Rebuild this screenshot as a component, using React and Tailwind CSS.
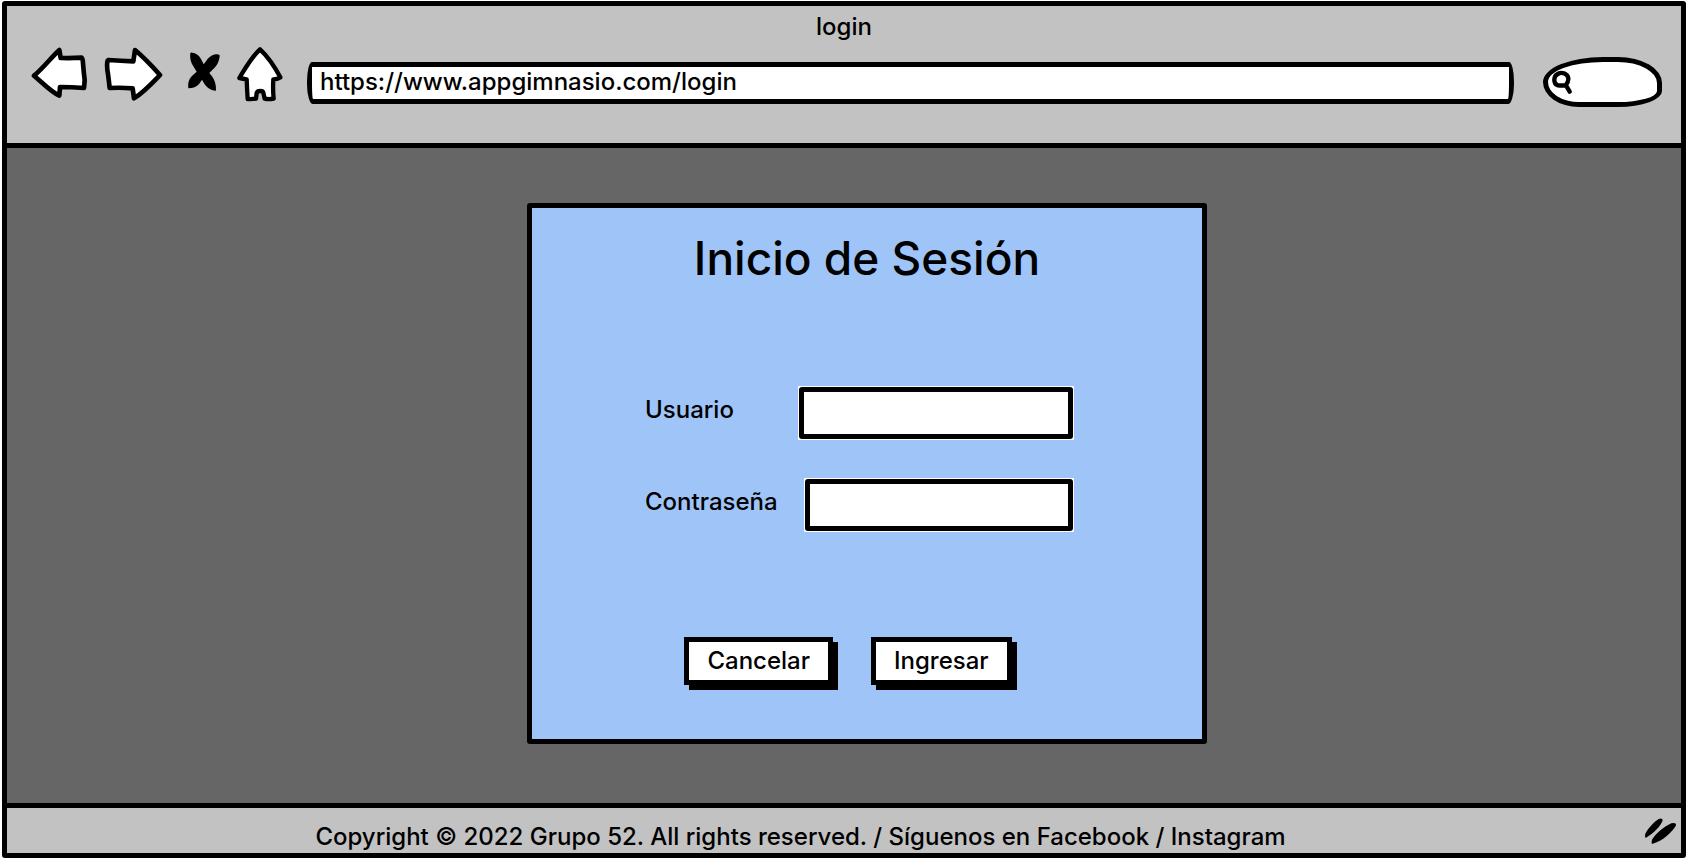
import React from "react";

function BackIcon() {
  return (
    <svg viewBox="93 138 171 168" className="h-[56px] w-[57px]" aria-hidden="true">
      <path d="M102 227C128 206 153 173 178 150L182 174Q215 175 245 173Q248 173 249 190Q251 215 254 240Q253 255 252 264Q215 261 180 261L178 287C153 276 127 248 102 227Z" fill="#fff" stroke="#000" strokeWidth="14" strokeLinejoin="round" />
    </svg>
  );
}

function ForwardIcon() {
  return (
    <svg viewBox="314 138 177 168" className="h-[56px] w-[59px]" aria-hidden="true">
      <path d="M327 180Q364 183 402 184L407 150C432 171 458 198 482 225C458 250 431 279 404 295L400 265Q365 262 331 264Q329 245 326 222Q322 203 324 185Q324 181 327 180Z" fill="#fff" stroke="#000" strokeWidth="14" strokeLinejoin="round" />
    </svg>
  );
}

function StopIcon() {
  return (
    <svg viewBox="561 136 102 168" className="h-[56px] w-[34px]" aria-hidden="true">
      <path d="M571 157Q571 155 577 156C592 158 600 168 605 179L611 191L619 180C627 169 638 161 651 161Q660 161 659 166C658 180 651 196 639 206L628 217L636 227C645 239 649 254 648 270C634 270 621 261 613 249L606 237L598 249C590 258 579 263 565 263C563 249 566 237 575 227L590 213L580 197C572 185 569 172 571 157Z" fill="#000" />
    </svg>
  );
}

function HomeIcon() {
  return (
    <svg viewBox="708 135 144 168" className="h-[56px] w-[48px]" aria-hidden="true">
      <path d="M780 145C803 166 824 197 841 229Q832 235 820 235Q818 264 821 293Q806 296 794 293L790 275Q789 270 781 270Q772 270 770 276L768 293Q755 295 743 294Q741 262 740 235Q730 233 718 231C735 203 753 170 780 145Z" fill="#fff" stroke="#000" strokeWidth="13" strokeLinejoin="round" />
    </svg>
  );
}

function SearchIcon() {
  return (
    <svg viewBox="213 218 63 75" className="h-[25px] w-[21px] shrink-0" aria-hidden="true">
      <path d="M257 264Q245 265 233 264C219 258 220 237 233 230C247 222 263 230 265 243Q266 254 257 264ZM258 264L269 283" fill="none" stroke="#000" strokeWidth="13" strokeLinecap="round" strokeLinejoin="round" />
    </svg>
  );
}

function ResizeIcon() {
  return (
    <svg viewBox="433 119 99 90" className="h-[30px] w-[33px] shrink-0" aria-hidden="true">
      <path d="M438 185Q434 181 437 172C446 155 464 136 477 128Q489 124 489 132C485 147 462 172 438 185ZM457 203Q454 199 457 190C469 171 493 151 515 141Q530 138 529 147C520 165 490 195 457 203Z" fill="#000" />
    </svg>
  );
}

function Field({ id, label, type, width }) {
  return (
    <div className="flex items-start justify-between">
      <label htmlFor={id} className="pt-2 leading-8">{label}</label>
      <div className={`${width} bg-white p-px`}>
        <input id={id} type={type} className="block h-[52px] w-full rounded-[3px] border-[5px] border-black bg-white px-2 outline-none" />
      </div>
    </div>
  );
}

function SketchButton({ type, children }) {
  return (
    <button type={type} className="h-12 border-[5px] border-black bg-white px-[18px] leading-8 shadow-[5px_5px_0_#000]">
      {children}
    </button>
  );
}

export default function App() {
  return (
    <div className="flex min-h-screen flex-col bg-white px-[2px] pt-px pb-[2px] font-['Inter',sans-serif] text-[24px] font-medium text-black">
      <div className="flex flex-1 flex-col rounded-[3px] border-[5px] border-black bg-[#c2c2c2]">
        <header className="flex h-[142px] flex-col border-b-[5px] border-black">
          <h1 className="h-10 pt-[5px] text-center leading-8">login</h1>
          <div className="flex items-start pr-[19px] pl-6">
            <nav className="flex items-start">
              <button type="button" aria-label="Atrás"><BackIcon /></button>
              <button type="button" aria-label="Adelante" className="ml-4"><ForwardIcon /></button>
              <button type="button" aria-label="Detener" className="ml-6"><StopIcon /></button>
              <button type="button" aria-label="Inicio" className="ml-[15px]"><HomeIcon /></button>
            </nav>
            <input
              type="text"
              aria-label="Dirección"
              defaultValue="https://www.appgimnasio.com/login"
              className="mt-4 ml-[23px] h-[42px] min-w-0 flex-1 rounded-tl-[5px_20px] rounded-tr-[5px_20px] rounded-br-[6px_20px] rounded-bl-[6px_20px] border-[5px] border-black bg-white px-2 pb-[3px] outline-none"
            />
            <div className="mt-[11px] ml-[29px] flex h-[50px] w-[119px] items-center rounded-tl-[60px_25px] rounded-tr-[44px_26px] rounded-br-[44px_16px] rounded-bl-[36px_25px] border-[5px] border-black bg-white pl-[3px]">
              <SearchIcon />
              <input type="text" aria-label="Buscar" className="w-full min-w-0 bg-transparent text-base outline-none" />
            </div>
          </div>
        </header>

        <main className="flex flex-1 items-start justify-center bg-[#666666] pt-[55px] pb-[56px] pl-[46px]">
          <form className="flex w-[680px] flex-col rounded-[3px] border-[5px] border-black bg-[#9fc4f8] pt-5 pb-[54px]">
            <h2 className="text-center text-[46px] leading-[60px]">Inicio de Sesión</h2>
            <div className="mt-[98px] flex flex-col gap-[38px] pr-[128px] pl-[113px]">
              <Field id="usuario" label="Usuario" type="text" width="w-[276px]" />
              <Field id="contrasena" label="Contraseña" type="password" width="w-[270px]" />
            </div>
            <div className="mt-[105px] flex justify-center gap-[38px] pr-[38px]">
              <SketchButton type="button">Cancelar</SketchButton>
              <SketchButton type="submit">Ingresar</SketchButton>
            </div>
          </form>
        </main>

        <footer className="flex h-[50px] items-center border-t-[5px] border-black pr-1">
          <p className="flex-1 pt-3 pr-[50px] text-center leading-8">
            Copyright © 2022 Grupo 52. All rights reserved. / Síguenos en <a href="#facebook">Facebook</a> / <a href="#instagram">Instagram</a>
          </p>
          <ResizeIcon />
        </footer>
      </div>
    </div>
  );
}
